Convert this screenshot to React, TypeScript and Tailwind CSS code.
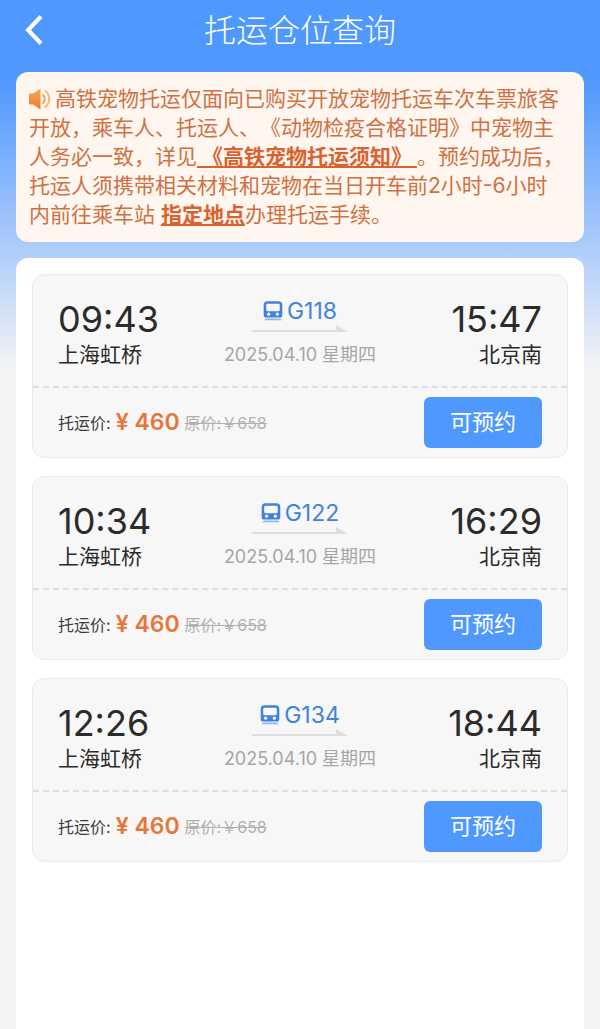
const trains = [
  { no: 'G118', from: '上海虹桥', to: '北京南', start: '09:43', end: '15:47' },
  { no: 'G122', from: '上海虹桥', to: '北京南', start: '10:34', end: '16:29' },
  { no: 'G134', from: '上海虹桥', to: '北京南', start: '12:26', end: '18:44' },
];

function BackIcon() {
  return (
    <svg viewBox="0 0 20 32" className="h-8 w-5" fill="none" stroke="currentColor" strokeWidth="4" aria-hidden="true">
      <path d="M17 2.5L4 16l13 13.5" />
    </svg>
  );
}

function SpeakerIcon() {
  return (
    <svg viewBox="0 0 22 22" className="mr-1 inline-block h-[22px] w-[22px] align-[-4px]" aria-hidden="true">
      <defs>
        <linearGradient id="speaker" x1="0" y1="0" x2="0" y2="1">
          <stop offset="0" stopColor="#f6a95a" />
          <stop offset="1" stopColor="#ee7a2e" />
        </linearGradient>
      </defs>
      <path d="M1 5.5h3L11.5 0.5v21L4 16.5H1a1 1 0 0 1-1-1v-9a1 1 0 0 1 1-1z" fill="url(#speaker)" />
      <path d="M14 7a5.2 5.2 0 0 1 0 8" fill="none" stroke="#eda052" strokeWidth="1.8" strokeLinecap="round" />
      <path d="M16.2 3a10 10 0 0 1 0 16" fill="none" stroke="#f0b478" strokeWidth="1.8" strokeLinecap="round" />
    </svg>
  );
}

function TrainIcon() {
  return (
    <svg viewBox="0 0 20 20" className="h-5 w-5" aria-hidden="true">
      <path
        fillRule="evenodd"
        fill="#3f83dc"
        d="M4.5 0.3h11A3.8 3.8 0 0 1 19.3 4v10a2.6 2.6 0 0 1-2.6 2.6H3.3A2.6 2.6 0 0 1 .7 14V4A3.8 3.8 0 0 1 4.5 .3zM4.6 2.8c-.9 0-1.4.6-1.4 1.4v4.6c0 .8.5 1.4 1.4 1.4h10.8c.9 0 1.4-.6 1.4-1.4V4.2c0-.8-.5-1.4-1.4-1.4z"
      />
      <circle cx="5.6" cy="13.2" r="1.6" fill="#f7f7f7" />
      <circle cx="14.4" cy="13.2" r="1.6" fill="#f7f7f7" />
      <path d="M3 17.4h14l2 1.8H1z" fill="#8db8ee" />
    </svg>
  );
}

function TrainCard({ train }: { train: (typeof trains)[number] }) {
  return (
    <li className="rounded-xl border border-[#ebebeb] bg-[#f7f7f7]">
      <div className="flex h-[113px] items-start justify-between border-b-2 border-dashed border-[#dedede] px-[25px] pt-6">
        <div className="flex-1 text-[#2b2b2b]">
          <p className="text-[36px] leading-10">{train.start}</p>
          <p className="text-[21px] leading-8">{train.from}</p>
        </div>
        <div className="flex flex-col items-center">
          <p className="flex items-center gap-1 text-[23px] leading-6 text-[#3f83dc]">
            <TrainIcon />
            {train.no}
          </p>
          <svg viewBox="0 0 96 8" className="mt-0.5 h-2 w-24" aria-hidden="true">
            <path d="M0 5h84V0l12 7H0z" fill="#dedede" />
          </svg>
          <p className="mt-2 text-[18px] leading-7 text-[#a6a6a6]">2025.04.10 星期四</p>
        </div>
        <div className="flex-1 text-right text-[#2b2b2b]">
          <p className="text-[36px] leading-10">{train.end}</p>
          <p className="text-[21px] leading-8">{train.to}</p>
        </div>
      </div>
      <div className="flex h-[69px] items-center justify-between px-[25px]">
        <p className="flex items-center gap-[5px] whitespace-nowrap">
          <span className="text-base text-[#3c3c3c]">托运价:</span>
          <span className="text-[23px] font-semibold text-[#e8763a]">¥ 460</span>
          <del className="text-base text-[#b0b0b0]">原价:￥658</del>
        </p>
        <button type="button" className="h-[51px] w-[118px] rounded-md bg-[#4f98fe] text-[22px] text-white">
          可预约
        </button>
      </div>
    </li>
  );
}

export default function App() {
  return (
    <div className="flex min-h-screen flex-col bg-[#f4f4f5] bg-[linear-gradient(to_bottom,#4f98fe_0px,#4f98fe_80px,#a9cafb_240px,#f4f4f5_370px)] px-4 font-['Inter','Noto_Sans_CJK_SC',sans-serif]">
      <header className="flex h-[72px] items-start pt-2 text-white">
        <button type="button" aria-label="返回" className="flex h-11 w-9 items-center justify-center">
          <BackIcon />
        </button>
        <h1 className="flex-1 pr-9 text-center text-[32px] leading-[46px] font-light">托运仓位查询</h1>
      </header>

      <section className="rounded-xl bg-[#fef6ef] pt-3 pr-5 pb-[13px] pl-[13px] text-[21px] leading-[29px] text-[#cf7144] [text-spacing-trim:space-all]">
        <p>
          <SpeakerIcon />
          高铁宠物托运仅面向已购买开放宠物托运车次车票旅客开放，乘车人、托运人、《动物检疫合格证明》中宠物主人务必一致，详见
          <a href="#notice" className="font-bold text-[#d9622f] underline">
            &nbsp;《高铁宠物托运须知》&nbsp;
          </a>
          。预约成功后，托运人须携带相关材料和宠物在当日开车前2小时-6小时内前往乘车站{' '}
          <a href="#location" className="font-bold text-[#d9622f] underline">
            指定地点
          </a>
          办理托运手续。
        </p>
      </section>

      <main className="mt-4 flex-1 rounded-t-xl bg-white p-4">
        <ul className="flex flex-col gap-[18px]">
          {trains.map((train) => (
            <TrainCard key={train.no} train={train} />
          ))}
        </ul>
      </main>
    </div>
  );
}
